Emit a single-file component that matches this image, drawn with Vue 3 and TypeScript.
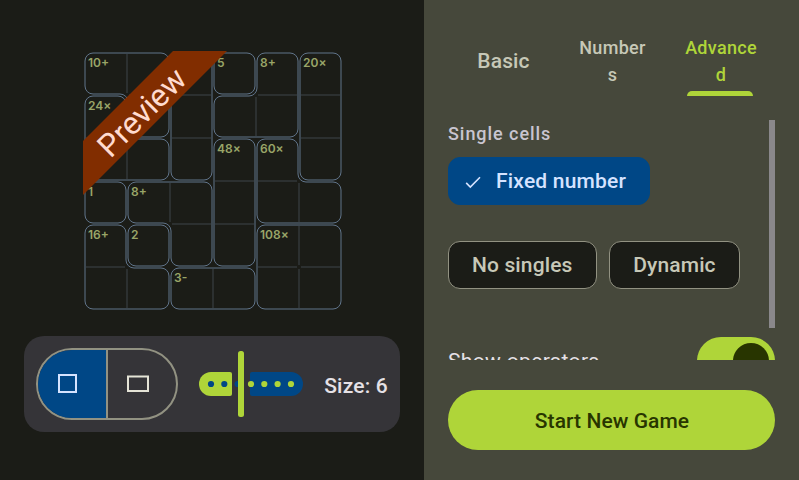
<script setup lang="ts">
import { ref } from 'vue'

interface Cage {
  label: string
  cells: [number, number][]
}

const PITCH = 43
const INSET = 1
const RADIUS = 8

// Cells are [row, column]; the first one carries the label.
const cages: Cage[] = [
  { label: '10+', cells: [[0, 0], [0, 1], [1, 1]] },
  { label: '24×', cells: [[1, 0], [2, 0], [2, 1]] },
  { label: '', cells: [[0, 2], [1, 2], [2, 2]] },
  { label: '5', cells: [[0, 3]] },
  { label: '8+', cells: [[0, 4], [1, 4], [1, 3]] },
  { label: '20×', cells: [[0, 5], [1, 5], [2, 5]] },
  { label: '48×', cells: [[2, 3], [3, 3], [4, 3]] },
  { label: '60×', cells: [[2, 4], [3, 4], [3, 5]] },
  { label: '1', cells: [[3, 0]] },
  { label: '8+', cells: [[3, 1], [3, 2], [4, 2]] },
  { label: '16+', cells: [[4, 0], [5, 0], [5, 1]] },
  { label: '2', cells: [[4, 1]] },
  { label: '3-', cells: [[5, 2], [5, 3]] },
  { label: '108×', cells: [[4, 4], [4, 5], [5, 4], [5, 5]] },
]

// Walks the cage border clockwise, moves it inwards and rounds each corner.
function outline(cells: [number, number][]): string {
  const has = (r: number, c: number) => cells.some(([a, b]) => a === r && b === c)
  const next = new Map<string, [number, number]>()
  for (const [r, c] of cells) {
    if (!has(r - 1, c)) next.set(`${c},${r}`, [c + 1, r])
    if (!has(r, c + 1)) next.set(`${c + 1},${r}`, [c + 1, r + 1])
    if (!has(r + 1, c)) next.set(`${c + 1},${r + 1}`, [c, r + 1])
    if (!has(r, c - 1)) next.set(`${c},${r + 1}`, [c, r])
  }
  const loop: [number, number][] = []
  const first = next.keys().next().value as string
  let key = first
  do {
    const point = next.get(key)!
    loop.push(point)
    key = point.join(',')
  } while (key !== first)

  let d = ''
  loop.forEach(([x, y], i) => {
    const [px, py] = loop[(i + loop.length - 1) % loop.length]
    const [nx, ny] = loop[(i + 1) % loop.length]
    const ax = x - px, ay = y - py, bx = nx - x, by = ny - y
    const turn = ax * by - ay * bx
    if (turn === 0) return
    const vx = x * PITCH + (-ay - by) * INSET
    const vy = y * PITCH + (ax + bx) * INSET
    d += `${d ? 'L' : 'M'}${vx - ax * RADIUS} ${vy - ay * RADIUS}`
    d += `A${RADIUS} ${RADIUS} 0 0 ${turn > 0 ? 1 : 0} ${vx + bx * RADIUS} ${vy + by * RADIUS}`
  })
  return d + 'Z'
}

function dividers(cells: [number, number][]): string {
  const has = (r: number, c: number) => cells.some(([a, b]) => a === r && b === c)
  return cells.map(([r, c]) => {
    const x = c * PITCH, y = r * PITCH
    const right = has(r, c + 1) ? `M${x + PITCH} ${y + 2}v${PITCH - 4}` : ''
    const below = has(r + 1, c) ? `M${x + 2} ${y + PITCH}h${PITCH - 4}` : ''
    return right + below
  }).join('')
}

const tabs = ['Basic', 'Numbers', 'Advanced']
const activeTab = ref('Advanced')
const chips = ['Fixed number', 'No singles', 'Dynamic']
const activeChip = ref('Fixed number')
</script>

<template>
  <main class="screen">
    <section class="left">
      <svg class="board" width="262" height="262" viewBox="-2 -2 262 262">
        <g v-for="(cage, i) in cages" :key="i">
          <path class="divider" :d="dividers(cage.cells)" />
          <path class="cage" :d="outline(cage.cells)" />
          <text class="label" :x="cage.cells[0][1] * PITCH + 4" :y="cage.cells[0][0] * PITCH + 15">{{ cage.label }}</text>
        </g>
        <path class="ribbon" d="M89 -1H143L-1 143V89Z" />
        <text class="preview" transform="translate(65.5 68) rotate(-45)" text-anchor="middle">Preview</text>
      </svg>
      <div class="controls">
        <div class="shape">
          <button class="half on">
            <svg width="20" height="20"><rect x="1" y="1" width="17" height="17" /></svg>
          </button>
          <button class="half">
            <svg width="22" height="18"><rect x="1" y="1.5" width="20" height="14.5" /></svg>
          </button>
        </div>
        <svg class="slider" width="104" height="66" viewBox="0 0 104 66">
          <path class="lime" d="M12 21H31a2 2 0 0 1 2 2V43a2 2 0 0 1 -2 2H12a12 12 0 0 1 0 -24Z" />
          <path class="blue" d="M53 21H92a12 12 0 0 1 0 24H53a2 2 0 0 1 -2 -2V23a2 2 0 0 1 2 -2Z" />
          <circle v-for="x in [12, 25.3, 38.6]" :key="x" class="blue" :cx="x" cy="33" r="3.1" />
          <circle v-for="x in [52, 65.3, 78.6, 92]" :key="x" class="lime" :cx="x" cy="33" r="3.1" />
          <rect class="lime" x="39" y="0" width="6" height="66" rx="2.5" />
        </svg>
        <span class="size">Size: 6</span>
      </div>
    </section>

    <section class="right">
      <nav class="tabs">
        <button v-for="t in tabs" :key="t" class="tab" :class="{ active: t === activeTab, large: t === 'Basic' }" @click="activeTab = t">
          <span class="tab-text">{{ t }}</span>
        </button>
      </nav>
      <div class="scroll">
        <div class="options">
          <h2>Single cells</h2>
          <div class="chips">
            <button v-for="c in chips" :key="c" class="chip" :class="{ checked: c === activeChip }" @click="activeChip = c">
              <svg v-if="c === activeChip" class="check" width="16" height="16" viewBox="0 0 16 16"><path d="M1.2 9.9L5.3 14L15 4.3" /></svg>
              {{ c }}
            </button>
          </div>
          <div class="row">
            <span>Show operators</span>
            <span class="switch"><span class="thumb"></span></span>
          </div>
        </div>
        <div class="scrollbar"></div>
      </div>
      <button class="start">Start New Game</button>
    </section>
  </main>
</template>

<style>
body {
  margin: 0;
  background: #1b1c17;
}
</style>

<style scoped>
.screen {
  display: flex;
  width: 799px;
  height: 480px;
  overflow: hidden;
  font-family: Roboto, sans-serif;
  font-weight: 500;
}
button {
  margin: 0;
  padding: 0;
  border: 0;
  background: none;
  font: inherit;
  color: inherit;
}
.left {
  box-sizing: border-box;
  width: 424px;
  padding: 50px 24px 48px;
  display: flex;
  flex-direction: column;
  background: #1b1c17;
}
.board {
  display: block;
  margin-left: 58px;
}
.divider, .cage {
  fill: none;
  stroke-width: 1;
}
.divider { stroke: #3e454b; }
.cage { stroke: #61758b; }
.label {
  font: 600 12px Inter, sans-serif;
  fill: #99a568;
}
.ribbon { fill: #812d00; }
.preview {
  font: 400 31.5px Roboto, sans-serif;
  fill: #ffdbcf;
}
.controls {
  box-sizing: border-box;
  height: 96px;
  margin-top: 24px;
  padding: 0 12px;
  border-radius: 20px;
  background: #353438;
  display: flex;
  align-items: center;
}
.shape {
  box-sizing: border-box;
  width: 142px;
  height: 72px;
  border: 2px solid #929282;
  border-radius: 36px;
  overflow: hidden;
  display: flex;
}
.half {
  box-sizing: border-box;
  flex: 1;
  display: flex;
  align-items: center;
  justify-content: center;
}
.half.on {
  flex: 0 0 70px;
  padding-right: 8px;
  border-right: 2px solid #929282;
  background: #004786;
}
.half:not(.on) { padding-right: 8px; }
.half rect {
  fill: none;
  stroke: #e4e3d6;
  stroke-width: 2;
}
.half.on rect { stroke: #d5e3ff; }
.slider { margin-left: 21px; }
.lime { fill: #afd539; }
.blue { fill: #004786; }
.size {
  margin-left: auto;
  padding-top: 3px;
  font-size: 21px;
  letter-spacing: 0.2px;
  color: #e5e1e6;
  white-space: nowrap;
}
.right {
  box-sizing: border-box;
  width: 375px;
  padding: 24px 24px 30px;
  background: #46483b;
  display: flex;
  flex-direction: column;
}
.tabs {
  height: 72px;
  display: grid;
  grid-template-columns: repeat(3, minmax(0, 1fr));
}
.tab {
  display: flex;
  flex-direction: column;
  align-items: center;
  position: relative;
  color: #c7c8b7;
  font-size: 18px;
  line-height: 27px;
  letter-spacing: 0.3px;
  padding: 10px 15px 0 16px;
}
.tab-text {
  width: 74px;
  word-break: break-all;
  text-align: center;
}
.tab.large {
  font-size: 21px;
  letter-spacing: 0.15px;
  padding-top: 24px;
}
.tab:not(.active) { padding-left: 17px; }
.tab.active { color: #afd539; }
.tab.active::after {
  content: '';
  position: absolute;
  bottom: 0;
  left: 21px;
  width: 66px;
  height: 5px;
  border-radius: 5px 5px 0 0;
  background: #afd539;
}
.scroll {
  height: 240px;
  margin-top: 24px;
  overflow: hidden;
  display: flex;
}
.options { flex: 0 0 327px; }
.scrollbar {
  flex: 0 0 6px;
  height: 208px;
  margin-left: -6px;
  background: #8a888b;
}
h2 {
  margin: 0;
  padding: 3px 0 1px;
  font-size: 18px;
  line-height: 21px;
  font-weight: 500;
  letter-spacing: 0.95px;
  color: #c9c5d0;
}
.chips {
  display: flex;
  flex-wrap: wrap;
  gap: 36px 12px;
  margin-top: 12px;
  width: 310px;
}
.chip {
  box-sizing: border-box;
  height: 48px;
  padding: 0 23.7px 0 23px;
  border: 1.5px solid #929282;
  border-radius: 12px;
  background: #1b1c17;
  color: #c7c8b7;
  font-size: 21px;
  letter-spacing: 0.13px;
  display: flex;
  align-items: center;
}
.chip.checked {
  border-color: #004786;
  background: #004786;
  color: #d5e3ff;
  padding: 0 22.8px 0 16px;
  letter-spacing: 0.2px;
}
.check {
  margin-right: 15px;
  fill: none;
  stroke: #d5e3ff;
  stroke-width: 1.6;
}
.row {
  display: flex;
  justify-content: space-between;
  margin-top: 48px;
  font-size: 21px;
  font-weight: 400;
  letter-spacing: 0.35px;
  color: #e5e1e6;
}
.row > span:first-child { padding-top: 12px; }
.switch {
  box-sizing: border-box;
  width: 78px;
  height: 48px;
  padding: 6px;
  border-radius: 24px;
  background: #afd539;
  display: flex;
  justify-content: flex-end;
}
.thumb {
  width: 36px;
  height: 36px;
  border-radius: 50%;
  background: #283500;
}
.start {
  height: 60px;
  padding: 2px 0 0 1px;
  margin-top: 30px;
  border-radius: 30px;
  background: #afd539;
  color: #283500;
  font-size: 21px;
  letter-spacing: 0.08px;
}
</style>
